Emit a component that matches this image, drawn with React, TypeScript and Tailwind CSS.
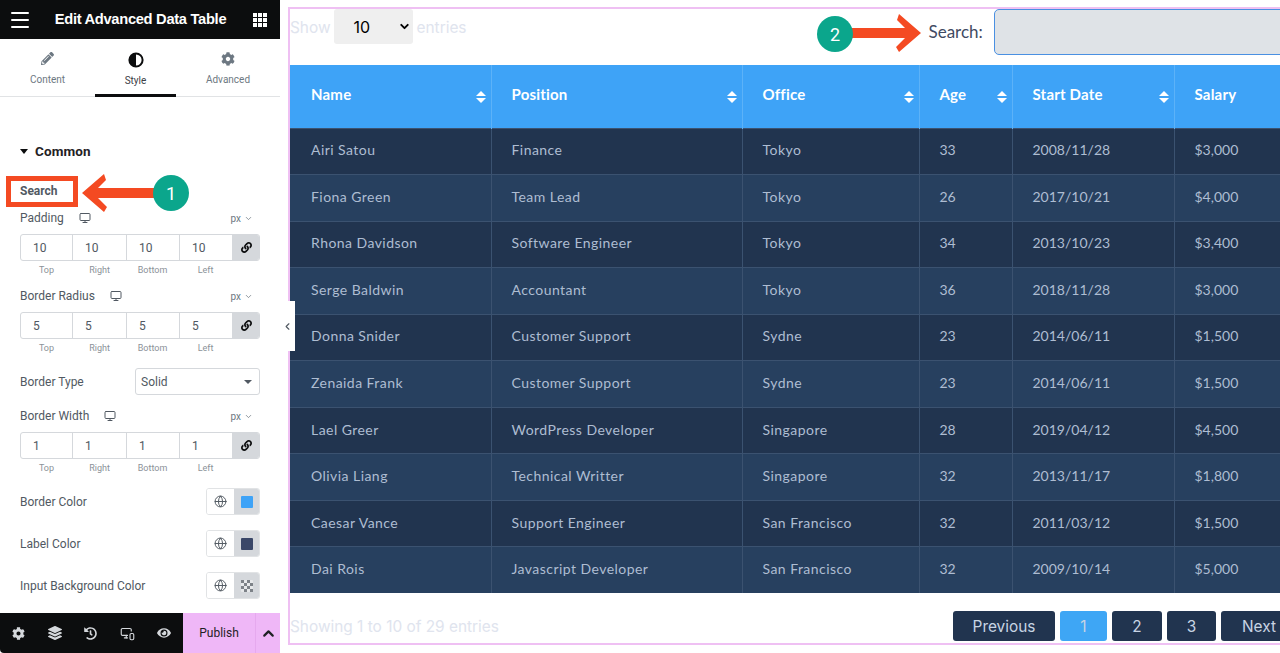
import React from 'react';
import { Monitor, Globe, ChevronDown, ChevronUp, ChevronLeft, MonitorSmartphone, Menu } from 'lucide-react';
import { FaCog, FaEye, FaHistory, FaLayerGroup, FaLink, FaPencilAlt } from 'react-icons/fa';

const rows = [
  ['Airi Satou', 'Finance', 'Tokyo', '33', '2008/11/28', '$3,000'],
  ['Fiona Green', 'Team Lead', 'Tokyo', '26', '2017/10/21', '$4,000'],
  ['Rhona Davidson', 'Software Engineer', 'Tokyo', '34', '2013/10/23', '$3,400'],
  ['Serge Baldwin', 'Accountant', 'Tokyo', '36', '2018/11/28', '$3,000'],
  ['Donna Snider', 'Customer Support', 'Sydne', '23', '2014/06/11', '$1,500'],
  ['Zenaida Frank', 'Customer Support', 'Sydne', '23', '2014/06/11', '$1,500'],
  ['Lael Greer', 'WordPress Developer', 'Singapore', '28', '2019/04/12', '$4,500'],
  ['Olivia Liang', 'Technical Writter', 'Singapore', '32', '2013/11/17', '$1,800'],
  ['Caesar Vance', 'Support Engineer', 'San Francisco', '32', '2011/03/12', '$1,500'],
  ['Dai Rois', 'Javascript Developer', 'San Francisco', '32', '2009/10/14', '$5,000'],
];

const headers = ['Name', 'Position', 'Office', 'Age', 'Start Date', 'Salary'];

const SortIcon = () => (
  <svg width="10" height="12" viewBox="0 0 10 12" className="absolute right-[5px] top-[26px]" fill="#fff">
    <path d="M5 0 L10 5 L0 5 Z" />
    <path d="M5 12 L10 7 L0 7 Z" />
  </svg>
);

const GridIcon = () => (
  <svg width="14" height="14" viewBox="0 0 14 14" fill="#fff">
    {[0, 5, 10].map(y =>
      [0, 5, 10].map(x => <rect key={`${x}-${y}`} x={x} y={y} width="4" height="4" />)
    )}
  </svg>
);

const ContrastIcon = () => (
  <svg width="16" height="16" viewBox="0 0 16 16">
    <circle cx="8" cy="8" r="6.6" fill="#fff" stroke="#0c0d0e" strokeWidth="2" />
    <path d="M8 1.5 A6.5 6.5 0 0 0 8 14.5 Z" fill="#0c0d0e" />
  </svg>
);

const Checker = () => (
  <svg width="12" height="12" viewBox="0 0 12 12">
    <rect width="12" height="12" fill="#e6e8ea" rx="1" />
    {[[0, 0], [6, 0], [3, 3], [9, 3], [0, 6], [6, 6], [3, 9], [9, 9]].map(([x, y]) => (
      <rect key={`${x}-${y}`} x={x} y={y} width="3" height="3" fill="#7d8288" />
    ))}
  </svg>
);

const FieldLabel = ({ label }: { label: string }) => (
  <div className="flex items-center h-[16px] pr-[7px]">
    <span className="text-[12px] text-[#515962]">{label}</span>
    <Monitor className="w-[12px] h-[12px] text-[#515962] ml-[15px]" strokeWidth={2} />
    <span className="ml-auto text-[10px] text-[#6d7882]">px</span>
    <ChevronDown className="w-[9px] h-[9px] ml-[3px] text-[#6d7882]" />
  </div>
);

const Dimensions = ({ value }: { value: string }) => (
  <>
    <div className="flex h-[27px] mt-[8px] border border-[#d5d8dc] rounded-[3px] overflow-hidden">
      {[52, 54, 53, 53].map((w, i) => (
        <div
          key={i}
          style={{ width: w }}
          className="flex items-center pl-[12px] border-r border-[#d5d8dc] text-[12px] text-[#515962]"
        >
          {value}
        </div>
      ))}
      <div className="flex-1 flex items-center justify-center bg-[#d5d8dc]">
        <FaLink className="w-[11px] h-[11px] text-[#0c0d0e]" />
      </div>
    </div>
    <div className="flex mt-[3px] pb-[1px] text-[9px] leading-[12px] text-[#8b9299] text-center">
      <span className="w-[53px]">Top</span>
      <span className="w-[53px]">Right</span>
      <span className="w-[53px]">Bottom</span>
      <span className="w-[53px]">Left</span>
    </div>
  </>
);

const ColorRow = ({ label, first, children }: { label: string; first?: boolean; children: React.ReactNode }) => (
  <div className={`flex items-center h-[27px] ${first ? 'mt-[13px]' : 'mt-[15px]'}`}>
    <span className="text-[12px] text-[#515962]">{label}</span>
    <div className="ml-auto flex w-[54px] h-[27px] border border-[#e1e3e5] rounded-[3px] overflow-hidden">
      <div className="w-[27px] flex items-center justify-center bg-white">
        <Globe className="w-[13px] h-[13px] text-[#515962]" strokeWidth={1.8} />
      </div>
      <div className="flex-1 flex items-center justify-center bg-[#d5d8dc]">{children}</div>
    </div>
  </div>
);

const Sidebar = () => (
  <aside className="w-[280px] shrink-0 h-[653px] flex flex-col bg-white font-['Roboto',sans-serif]">
    <div className="h-[39px] bg-[#0c0d0e] flex items-center pl-[8px] pr-[13px]">
      <Menu className="w-[24px] h-[24px] text-white" strokeWidth={2} />
      <span className="flex-1 text-center pr-[4px] text-[14.7px] font-bold text-white font-['Liberation_Sans',sans-serif] tracking-[-0.3px]">Edit Advanced Data Table</span>
      <GridIcon />
    </div>
    <div className="h-[58px] flex border-b border-[#e1e3e5]">
      <div className="w-[95px] flex flex-col items-center pt-[13px] text-[#6d7882]">
        <FaPencilAlt className="w-[13px] h-[13px]" />
        <span className="text-[10px] mt-[7px]">Content</span>
      </div>
      <div className="w-[81px] flex flex-col items-center pt-[13px] border-b-[3px] border-[#0c0d0e] h-[58px] text-[#0c0d0e]">
        <ContrastIcon />
        <span className="text-[10px] mt-[5px] text-[#3d4045]">Style</span>
      </div>
      <div className="w-[104px] flex flex-col items-center pt-[13px] text-[#6d7882]">
        <FaCog className="w-[14px] h-[14px]" />
        <span className="text-[10px] mt-[6px]">Advanced</span>
      </div>
    </div>
    <div className="flex-1 px-[20px]">
      <div className="flex items-center mt-[46px] h-[16px]">
        <span className="w-0 h-0 border-x-[4px] border-x-transparent border-t-[5px] border-t-[#0c0d0e]" />
        <span className="ml-[7px] text-[13.5px] font-bold text-[#1f2124] tracking-[0.1px]">Common</span>
      </div>
      <div className="text-[12px] font-bold text-[#515962] mt-[25px] h-[14px] leading-[14px]">Search</div>
      <div className="mt-[12px]">
        <FieldLabel label="Padding" />
      </div>
      <Dimensions value="10" />
      <div className="mt-[11px]">
        <FieldLabel label="Border Radius" />
      </div>
      <Dimensions value="5" />
      <div className="flex items-center h-[27px] mt-[13px]">
        <span className="text-[12px] text-[#515962]">Border Type</span>
        <div className="ml-auto w-[125px] h-[27px] border border-[#d5d8dc] rounded-[3px] flex items-center pl-[5px] pr-[7px] text-[12px] text-[#515962]">
          Solid
          <span className="ml-auto w-0 h-0 border-x-[4px] border-x-transparent border-t-[4px] border-t-[#515962]" />
        </div>
      </div>
      <div className="mt-[13px]">
        <FieldLabel label="Border Width" />
      </div>
      <Dimensions value="1" />
      <ColorRow label="Border Color" first>
        <span className="w-[12px] h-[12px] rounded-[1px] bg-[#3ea3f7]" />
      </ColorRow>
      <ColorRow label="Label Color">
        <span className="w-[12px] h-[12px] rounded-[1px] bg-[#3a4768]" />
      </ColorRow>
      <ColorRow label="Input Background Color">
        <Checker />
      </ColorRow>
    </div>
    <div className="h-[40px] flex bg-[#0c0d0e] text-[#d5d8dc] rounded-bl-[4px]">
      <div className="w-[183px] grid grid-cols-5 pr-[1px]">
        <div className="flex items-center justify-center"><FaCog className="w-[13px] h-[13px]" /></div>
        <div className="flex items-center justify-center"><FaLayerGroup className="w-[14px] h-[14px]" /></div>
        <div className="flex items-center justify-center"><FaHistory className="w-[13px] h-[13px]" /></div>
        <div className="flex items-center justify-center"><MonitorSmartphone className="w-[15px] h-[15px]" strokeWidth={1.8} /></div>
        <div className="flex items-center justify-center"><FaEye className="w-[14px] h-[14px]" /></div>
      </div>
      <div className="flex-1 flex bg-[#efb7f7] text-[#1f2124]">
        <div className="w-[72px] flex items-center justify-center text-[12px]">Publish</div>
        <div className="flex-1 flex items-center justify-center border-l border-[#e6a9ee]">
          <ChevronUp className="w-[17px] h-[17px]" strokeWidth={3} />
        </div>
      </div>
    </div>
  </aside>
);

const DataTable = () => (
  <div className="w-[1100px] h-[638px] border-2 border-[#efc0f3] border-r-0 font-['Inter',sans-serif]">
    <div className="h-[56px] flex">
      <div className="flex items-start text-[15.4px] text-[#e0e4ee]">
        <span className="mt-[7px]">Show</span>
        <div className="ml-[3px] w-[79px] h-[35px] bg-[#efefef] rounded-[3px] flex items-center pl-[20px] text-[16px] text-black">
          10
          <ChevronDown className="w-[13px] h-[13px] ml-auto mr-[2px]" strokeWidth={3.5} />
        </div>
        <span className="ml-[4px] mt-[7px]">entries</span>
      </div>
      <div className="flex items-start ml-[462px] w-[600px]">
        <span className="mt-[10px] text-[17px] text-[#3f4a63] font-['Lato',sans-serif]">Search:</span>
        <div className="ml-[11px] w-[400px] h-[46px] bg-[#dfe3e7] border border-[#4a90e2] rounded-[5px]" />
      </div>
    </div>
    <table className="table-fixed border-collapse w-[1080px] font-['Lato',sans-serif]">
      <colgroup>
        <col className="w-[201px]" />
        <col className="w-[251px]" />
        <col className="w-[177px]" />
        <col className="w-[93px]" />
        <col className="w-[162px]" />
        <col className="w-[196px]" />
      </colgroup>
      <thead>
        <tr className="h-[63px] bg-[#3ea3f7]">
          {headers.map((h, j) => (
            <th key={h} className={`relative text-left pb-[4px] text-[15px] tracking-[0.2px] font-bold text-white border-r border-[#5cb2f8] ${j === 0 ? 'pl-[21px]' : 'pl-[20px]'}`}>
              {h}
              <SortIcon />
            </th>
          ))}
        </tr>
      </thead>
      <tbody>
        {rows.map((row, i) => (
          <tr key={row[0]} className={`h-[46.55px] border-t border-[#3b5270] ${i % 2 === 0 ? 'bg-[#21344f]' : 'bg-[#27405f]'}`}>
            {row.map((cell, j) => (
              <td key={j} className={`pb-[3px] text-[14px] text-[#aebdd2] border-r border-[#3b5270] ${j === 0 ? 'pl-[21px]' : 'pl-[20px]'} ${j < 3 ? 'tracking-[0.45px]' : 'tracking-[0px]'}`}>{cell}</td>
            ))}
          </tr>
        ))}
      </tbody>
    </table>
    <div className="flex h-[44px]">
      <span className="w-[663px] mt-[24px] text-[15.4px] leading-[20px] text-[#e0e4ee]">Showing 1 to 10 of 29 entries</span>
      <div className="flex gap-[5px] mt-[18px] h-[30px] text-[15.4px] text-[#c8d4e4]">
        <div className="w-[102px] rounded-[3px] bg-[#21344f] flex items-center justify-center">Previous</div>
        <div className="w-[47px] rounded-[3px] bg-[#3ea6f5] flex items-center justify-center">1</div>
        <div className="w-[50px] rounded-[3px] bg-[#21344f] flex items-center justify-center">2</div>
        <div className="w-[49px] rounded-[3px] bg-[#21344f] flex items-center justify-center">3</div>
        <div className="w-[70px] rounded-[3px] bg-[#21344f] flex items-center pl-[21px]">Next</div>
      </div>
    </div>
  </div>
);

const Arrow = ({ className, flip }: { className: string; flip?: boolean }) => (
  <svg width="73" height="38" viewBox="0 0 73 38" className={`absolute ${className}`} style={flip ? { transform: 'scaleX(-1)' } : undefined}>
    <path d="M0 14 H57 L49 6 L51 0 L73 19 L51 38 L48 33 L57 24 H0 Z" fill="#f44a22" />
  </svg>
);

const Badge = ({ n, className }: { n: string; className: string }) => (
  <div className={`absolute w-[36px] h-[36px] rounded-full bg-[#0ba68c] text-white flex items-center justify-center text-[18px] font-['Roboto',sans-serif] ${className}`}>{n}</div>
);

export default function App() {
  return (
    <div className="relative w-[1280px] h-[653px] overflow-hidden flex bg-white">
      <Sidebar />
      <main className="flex-1 pl-[8px] pt-[7px] overflow-hidden">
        <DataTable />
      </main>

      {/* collapse tab */}
      <div className="absolute left-[280px] top-[301px] w-[15px] h-[50px] bg-white flex items-center justify-center">
        <ChevronLeft className="w-[11px] h-[11px] text-[#515962]" strokeWidth={2.5} />
      </div>

      {/* annotations */}
      <div className="absolute left-[6px] top-[176px] w-[72px] h-[31px] border-[5px] border-[#f44a22]" />
      <Arrow className="left-[82px] top-[174px]" flip />
      <Badge n="1" className="left-[153px] top-[175px]" />
      <Arrow className="left-[848px] top-[14px]" />
      <Badge n="2" className="left-[817px] top-[16px]" />
    </div>
  );
}
